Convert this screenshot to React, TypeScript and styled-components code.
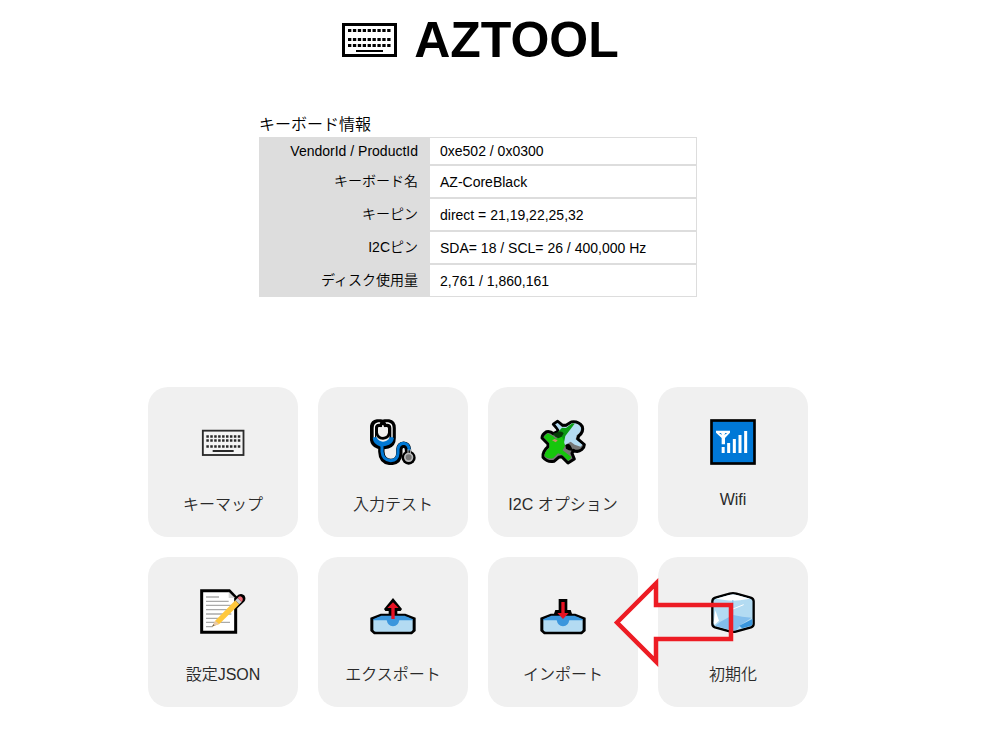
import React from 'react';
import styled, { createGlobalStyle } from 'styled-components';

const GlobalStyle = createGlobalStyle`
  * { box-sizing: border-box; }
  body {
    margin: 0;
    background: #fff;
    color: #000;
    font-family: "Liberation Sans", Arial, "Noto Sans CJK JP", sans-serif;
  }
`;

const Page = styled.main`
  display: flex;
  flex-direction: column;
  align-items: center;
  padding: 8px 28px 48px 0;
`;

const Title = styled.h1`
  display: flex;
  align-items: center;
  gap: 17px;
  margin: 0;
  padding-left: 5px;
  font-size: 50px;
  line-height: 64px;
`;

const Info = styled.section`
  width: 438px;
  max-width: 100%;
  margin: 40px 0 90px;
`;

const InfoTable = styled.table`
  width: 100%;
  border-spacing: 0;
  table-layout: fixed;
  font-size: 14px;
`;

const Caption = styled.caption`
  height: 25px;
  font-size: 16px;
  font-weight: 350;
  line-height: 26px;
  text-align: left;
`;

const InfoRow = styled.tr<{ $compact: boolean }>`
  height: ${({ $compact }) => ($compact ? 28 : 33)}px;
`;

const Name = styled.th<{ $compact: boolean }>`
  width: 170px;
  padding: 0 11px ${({ $compact }) => ($compact ? 0 : 4)}px;
  background: #ddd;
  font-weight: 350;
  text-align: right;
`;

const Value = styled.td`
  padding: 0 10px;
  border: 1px solid #ddd;
`;

const Menu = styled.nav`
  position: relative;
  display: grid;
  grid-template-columns: repeat(4, 150px);
  gap: 20px;
`;

const Card = styled.button`
  display: flex;
  flex-direction: column;
  align-items: center;
  gap: 26px;
  height: 150px;
  padding: 32px 0 0;
  border: 0;
  border-radius: 20px;
  background: #f0f0f0;
  color: #2a2a2a;
  font: inherit;
  font-size: 16px;
  font-weight: 350;
  cursor: pointer;
`;

const Icon = styled.svg`
  display: block;
  flex: none;
  width: 46px;
  height: 46px;
`;

const TitleIcon = styled.svg`
  width: 55px;
  height: 34px;
`;

const Pointer = styled.svg`
  position: absolute;
  top: 190px;
  left: 465px;
  width: 122px;
  height: 92px;
  pointer-events: none;
`;

const KeyboardIcon = () => (
  <Icon viewBox="30 12 138 138" aria-hidden="true">
    <rect x="38.500" y="47" width="122" height="73" fill="#f4f4f4" stroke="#2a2a2a" strokeWidth="5.500" />
    <path d="M49 64.500H151M49 76.500H151M49 94.500H151" stroke="#2a2a2a" strokeWidth="8" strokeDasharray="7.500 4.300" />
    <path d="M68 108H131" stroke="#2a2a2a" strokeWidth="6" />
  </Icon>
);

const StethoscopeIcon = () => (
  <Icon viewBox="30 27 138 138" aria-hidden="true" fill="none" strokeLinecap="round" strokeLinejoin="round">
    <path d="M62 37H52Q39 39 39 54V84Q39 101 53 106L64 109V125Q65 154 92 156Q116 155 118 131V118Q119 105 131 104Q143 105 144 119V128M74 37H86Q98 39 98 54V84Q98 101 84 106L67 109" stroke="#000" strokeWidth="19" />
    <circle cx="146" cy="143" r="21" fill="#000" />
    <path d="M59 39H55Q43 41 43 54V83M78 39H84Q96 41 96 54V83" stroke="#fff" strokeWidth="4" />
    <path d="M43 83V85Q44 99 62 105L66 108V125Q68 150 92 152Q113 150 114 130V118Q116 101 131 100Q146 101 148 121M97 83V85Q95 99 77 103L67 105" stroke="#0078d4" strokeWidth="9" strokeLinecap="butt" />
    <path d="M40 82H50Q56 95 69 95Q83 95 89 82H99Q98 100 69 108Q42 100 40 82Z" fill="#0078d4" />
    <path d="M62 47H55Q50 48 50 55V68Q53 84 69 85Q86 84 88 68V55Q87 48 82 47H75" fill="#f0f0f0" stroke="#000" strokeWidth="8" />
    <path d="M63 42V48M75 42V48" stroke="#000" strokeWidth="7" />
    <circle cx="146" cy="142" r="11.500" fill="#767676" stroke="#bbb" strokeWidth="5" />
    <path d="M144 119V129M151 119V129" stroke="#bbb" strokeWidth="3" />
  </Icon>
);

const PuzzleIcon = () => {
  const piece = 'M70 43L83 34L98 46H108L124 36Q146 33 157 50Q162 66 146 78L143 87L163 104Q163 112 155 119Q144 128 130 121L126 130L133 147L114 159L95 140L86 142L72 154Q52 158 39 142Q36 126 54 110V102L36 84Q36 73 50 65Q62 63 70 71L84 64L82 56Z';
  return (
    <Icon viewBox="30 27 138 138" aria-hidden="true">
      <path d={piece} fill="#767676" stroke="#000" strokeWidth="9" strokeLinejoin="round" />
      <path d="M76 43L83 39L96 51H109L126 40Q146 39 153 53Q155 64 140 76L137 88L157 104L152 110L134 104L122 95L105 105L90 81L89 61Z" fill="#b3dbf2" />
      <path d="M84 66L96 53L108 54L127 40L134 41L106 78L102 98L91 98Z" fill="#0b9b14" />
      <path d="M41 81L53 70L68 78L78 87L94 76L101 91L105 108L98 121L124 141L115 152L96 134L84 130L70 144Q54 149 44 138Q41 128 58 113V100Z" fill="#16c60c" />
      <path d="M66 91L74 87L83 91L77 97Z" fill="#c19066" />
      <path d="M68 72L86 65Q97 63 101 70L95 80L85 85L77 81Z" fill="#063d08" />
      <path d="M106 106Q115 98 121 106L130 122Q118 124 108 116Z" fill="#000" />
    </Icon>
  );
};

const WifiIcon = () => (
  <Icon viewBox="30 27 138 138" aria-hidden="true">
    <rect x="34.500" y="31.500" width="129" height="129" fill="#0078d7" stroke="#000" strokeWidth="8" />
    <path d="M48 62H90V68L75 84V103H65V84L48 68Z" fill="#fff" />
    <path d="M57 69H63L66 75ZM76 69H82L73 75Z" fill="#0078d7" />
    <path d="M69.500 111V129M86 99V129M103 87V129M120 75V129M137 63V129" stroke="#fff" strokeWidth="9" />
  </Icon>
);

const MemoIcon = () => (
  <Icon viewBox="30 27 138 138" aria-hidden="true">
    <path d="M35 32H118L137 52V157H35Z" fill="#fff" stroke="#000" strokeWidth="9" />
    <path d="M116 35V54H135Z" fill="#d5d5d5" />
    <path d="M48 51H87M48 64H116M48 76H124M48 89H124M48 102H124M48 115H90M48 127H120M48 140H68" stroke="#aaa" strokeWidth="4" />
    <path d="M137 55L146 46Q155 41 162 48Q167 56 161 64L141 83Z" fill="#000" stroke="#000" strokeWidth="4" />
    <path d="M66 140L77 121L136 61L148 73L88 132Z" fill="#ffc83d" />
    <path d="M66 140L76 122L87 132Z" fill="#e8c9aa" />
    <path d="M66 140L70 133L74 136Z" fill="#555" />
    <path d="M136 61L143 54L155 66L148 73Z" fill="#ccc" />
    <path d="M143 54Q148 46 155 51Q162 57 155 66Z" fill="#f1707b" />
  </Icon>
);

const TrayIcon = ({ outgoing }: { outgoing?: boolean }) => (
  <Icon viewBox="30 12 138 138" aria-hidden="true">
    <path d={outgoing
      ? 'M99 39L126 72L122 78H112V86H136L167 98V138L156 148H42L31 138V98L62 86H86V78H76L72 72Z'
      : 'M86 42H112V75H122L126 86H136L167 98V138L156 148H42L31 138V98L62 86H72L76 75H86Z'} fill="#000" />
    <path d="M39 103L64 92H134L159 103L156 109H42Z" fill="#3a96dd" />
    <path d="M40 106H158V133Q158 140 151 140H47Q40 140 40 133Z" fill="#b3dbf2" />
    <path d="M40 105H158L142 96H56ZM80 105Q83 122 99 124Q115 122 118 105Z" fill="#3a96dd" />
    {outgoing
      ? <path d="M99 52L116 69H104V102H94V69H82Z" fill="#e81224" />
      : <path d="M94 51H104V84H116L99 102L82 84H94Z" fill="#e81224" />}
  </Icon>
);

const IceIcon = () => (
  <Icon viewBox="330 72 138 138" aria-hidden="true">
    <path d="M389 86Q399 83 409 86L452 98Q461 101 461 109V177Q461 184 453 187L410 199Q399 202 389 199L345 187Q337 184 337 177V109Q337 101 346 98Z" fill="#b3dbf2" stroke="#000" strokeWidth="7" strokeLinejoin="round" />
    <path d="M348 101L388 90Q399 87 410 90L450 101L420 106Q397 109 374 105Z" fill="#fff" />
    <path d="M397 105V151L360 171L346 182L390 195Q400 198 409 195L423 179L455 158Q426 157 400 150V105Z" fill="#83beec" />
    <path d="M418 182L457 162V179L451 183L426 190Z" fill="#3a96dd" />
    <path d="M346 136L357 167L344 179L341 174Z" fill="#fff" />
    <path d="M394 134L431 119" stroke="#fff" strokeWidth="3" />
  </Icon>
);

const details = [
  ['VendorId / ProductId', '0xe502 / 0x0300'],
  ['キーボード名', 'AZ-CoreBlack'],
  ['キーピン', 'direct = 21,19,22,25,32'],
  ['I2Cピン', 'SDA= 18 / SCL= 26 / 400,000 Hz'],
  ['ディスク使用量', '2,761 / 1,860,161'],
];

const actions = [
  { label: 'キーマップ', icon: <KeyboardIcon /> },
  { label: '入力テスト', icon: <StethoscopeIcon /> },
  { label: 'I2C オプション', icon: <PuzzleIcon /> },
  { label: 'Wifi', icon: <WifiIcon /> },
  { label: '設定JSON', icon: <MemoIcon /> },
  { label: 'エクスポート', icon: <TrayIcon outgoing /> },
  { label: 'インポート', icon: <TrayIcon /> },
  { label: '初期化', icon: <IceIcon /> },
];

export default function App() {
  return (
    <>
      <GlobalStyle />
      <Page lang="ja">
        <Title>
          <TitleIcon viewBox="36 39 165 102" aria-hidden="true">
            <rect x="40.500" y="43.500" width="156" height="93" fill="#fff" stroke="#000" strokeWidth="9" />
            <path d="M54 61.500H184M54 88.500H184M54 106.500H184" stroke="#000" strokeWidth="9" strokeDasharray="10 4.700" />
            <path d="M78 123H159" stroke="#000" strokeWidth="6" />
          </TitleIcon>
          AZTOOL
        </Title>
        <Info>
          <InfoTable>
            <Caption>キーボード情報</Caption>
            <tbody>
              {details.map(([name, value], index) => (
                <InfoRow key={name} $compact={index === 0}>
                  <Name scope="row" $compact={index === 0}>{name}</Name>
                  <Value>{value}</Value>
                </InfoRow>
              ))}
            </tbody>
          </InfoTable>
        </Info>
        <Menu>
          {actions.map(({ label, icon }) => (
            <Card key={label} type="button">
              {icon}
              <span>{label}</span>
            </Card>
          ))}
          <Pointer viewBox="0 0 122 92" aria-hidden="true">
            <path d="M4 45.500L43 6.500V84.500Z" fill="#fff" />
            <path d="M4 45.500L43 6.500V28H118V62H43V84.500Z" fill="none" stroke="#ed1c24" strokeWidth="4.500" />
          </Pointer>
        </Menu>
      </Page>
    </>
  );
}
